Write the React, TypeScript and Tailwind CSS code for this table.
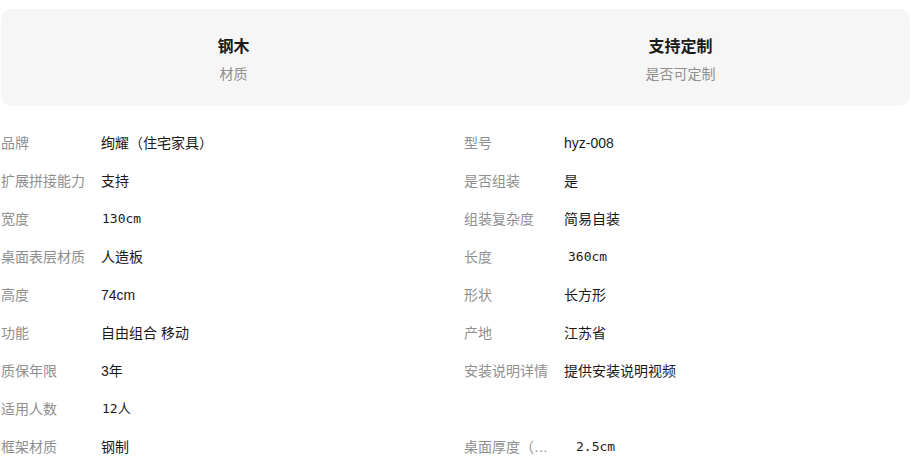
import React from 'react'

interface Attr {
  label: string
  value: string
  mono?: boolean
  indent?: string
}

const highlights = [
  { title: '钢木', sub: '材质' },
  { title: '支持定制', sub: '是否可定制' },
]

// 左右两列，按行排列（null 表示空格子）
const rows: [Attr | null, Attr | null][] = [
  [{ label: '品牌', value: '绚耀（住宅家具）' }, { label: '型号', value: 'hyz-008' }],
  [{ label: '扩展拼接能力', value: '支持' }, { label: '是否组装', value: '是' }],
  [{ label: '宽度', value: '130cm', mono: true, indent: 'pl-[1px]' }, { label: '组装复杂度', value: '简易自装' }],
  [{ label: '桌面表层材质', value: '人造板' }, { label: '长度', value: '360cm', mono: true, indent: 'pl-[4px]' }],
  [{ label: '高度', value: '74cm' }, { label: '形状', value: '长方形' }],
  [{ label: '功能', value: '自由组合 移动' }, { label: '产地', value: '江苏省' }],
  [{ label: '质保年限', value: '3年' }, { label: '安装说明详情', value: '提供安装说明视频' }],
  [{ label: '适用人数', value: '12人', mono: true, indent: 'pl-[1px]' }, null],
  [{ label: '框架材质', value: '钢制' }, { label: '桌面厚度（cm）', value: '2.5cm', mono: true, indent: 'pl-[12px]' }],
]

function Cell({ item }: { item: Attr | null }) {
  if (!item) return <div />
  return (
    <div className="flex items-center h-[38px] text-[14px] leading-5">
      <div className="w-[86px] mr-[14px] shrink-0 truncate text-[#8f8f8f]" title={item.label}>
        {item.label}
      </div>
      <div
        className={`text-[#1a1a1a] ${item.indent ?? ''} ${
          item.mono ? "font-['DejaVu_Sans_Mono','Noto_Sans_CJK_SC',monospace] text-[13px]" : ''
        }`}
      >
        {item.value}
      </div>
    </div>
  )
}

export default function App() {
  return (
    <div className="min-h-screen bg-white font-['Liberation_Sans','Noto_Sans_CJK_SC',sans-serif] pt-[9px] pl-[1px] pr-[1px]">
      {/* 顶部亮点 */}
      <div className="h-[97px] bg-[#f6f6f6] rounded-[10px] grid grid-cols-2 pl-[9px] pr-[6px]">
        {highlights.map((h) => (
          <div key={h.title} className="flex flex-col items-center justify-center gap-[5px] pt-[3px]">
            <div className="text-[16px] leading-6 font-bold text-[#1a1a1a]">{h.title}</div>
            <div className="text-[14px] leading-5 text-[#8f8f8f]">{h.sub}</div>
          </div>
        ))}
      </div>

      {/* 参数列表 */}
      <div className="mt-[18px] grid grid-cols-[463px_1fr]">
        {rows.map(([left, right], i) => (
          <React.Fragment key={i}>
            <Cell item={left} />
            <Cell item={right} />
          </React.Fragment>
        ))}
      </div>
    </div>
  )
}
